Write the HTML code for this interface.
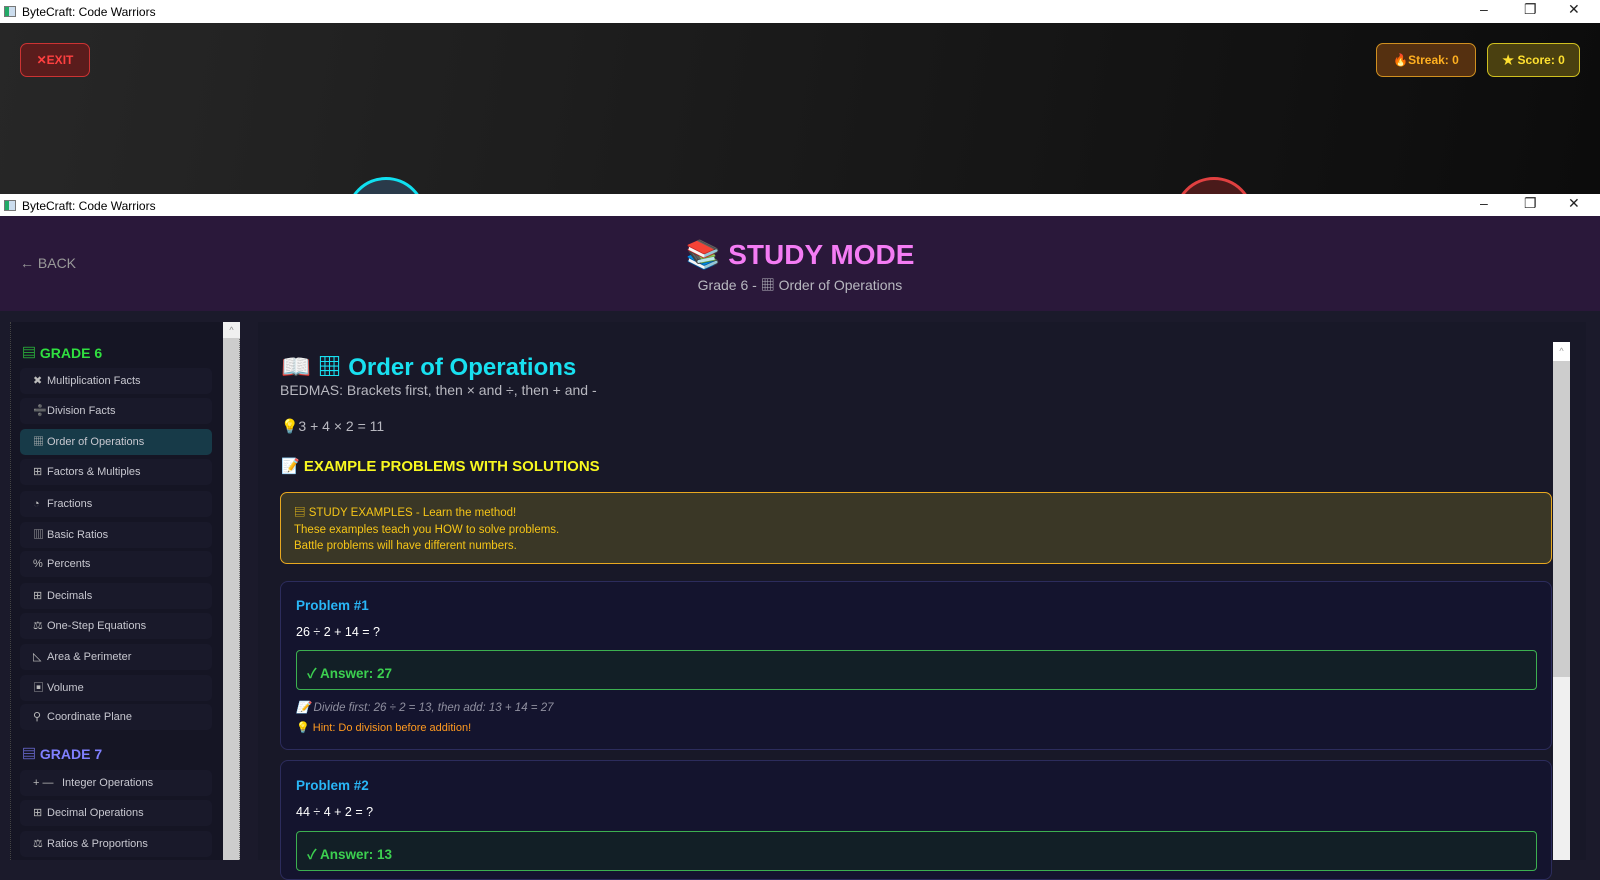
<!DOCTYPE html>
<html><head><meta charset="utf-8"><style>
*{margin:0;padding:0;box-sizing:border-box}
body{width:1600px;height:860px;overflow:hidden;background:#1b1a2b;font-family:"Liberation Sans","Noto Sans CJK SC",sans-serif;position:relative}
.abs{position:absolute}
.tb{left:0;width:1600px;height:23px;background:#fff;color:#000;font-size:12px}
.tb .t{position:absolute;left:22px;top:5px}
.tb .ic{position:absolute;left:4px;top:6px;width:12px;height:11px;border:1px solid #777;background:linear-gradient(90deg,#2a6 0 40%,#cde 40%)}
.tb .c{position:absolute;top:1px;font-size:14px;color:#222}
.si{position:absolute;left:20px;width:192px;height:26px;border-radius:5px;background:#19192a;color:#c8c8d0;font-size:11px;line-height:26px;padding-left:13px;white-space:nowrap}
.si b{display:inline-block;width:14px;color:#bbb;font-weight:normal}
.gh{position:absolute;left:22px;font-size:14px;font-weight:bold}
.txt{position:absolute;white-space:nowrap}
</style></head><body>
<div class="abs tb" style="top:0"><div class="ic"></div><div class="t">ByteCraft: Code Warriors</div>
<div class="c" style="left:1480px">&#8211;</div><div class="c" style="left:1524px">&#10064;</div><div class="c" style="left:1568px">&#10005;</div></div>
<div class="abs" style="top:23px;left:0;width:1600px;height:171px;background:linear-gradient(100deg,#272727,#0c0c0c);overflow:hidden">
 <div class="abs" style="left:20px;top:20px;width:70px;height:34px;border:1px solid #c33;border-radius:7px;background:#5a1c1c;color:#ff4040;font-size:12px;font-weight:bold;text-align:center;line-height:32px">✕EXIT</div>
 <div class="abs" style="left:1376px;top:20px;width:100px;height:34px;border:1px solid #d09020;border-radius:7px;background:#553010;color:#ffb020;font-size:12px;font-weight:bold;text-align:center;line-height:32px">🔥Streak: 0</div>
 <div class="abs" style="left:1487px;top:20px;width:93px;height:34px;border:1px solid #d0c020;border-radius:7px;background:#4a4010;color:#ffe030;font-size:12px;font-weight:bold;text-align:center;line-height:32px">★ Score: 0</div>
 <div class="abs" style="left:346px;top:154px;width:80px;height:80px;border-radius:50%;border:3px solid #10e0f0;background:#2a3a4a"></div>
 <div class="abs" style="left:1174px;top:154px;width:80px;height:80px;border-radius:50%;border:3px solid #e04040;background:#4a1a1a"></div>
</div>
<div class="abs tb" style="top:194px"><div class="ic"></div><div class="t">ByteCraft: Code Warriors</div>
<div class="c" style="left:1480px">&#8211;</div><div class="c" style="left:1524px">&#10064;</div><div class="c" style="left:1568px">&#10005;</div></div>
<div class="abs" style="top:216px;left:0;width:1600px;height:95px;background:#2a183a">
 <div class="txt" style="left:20px;top:39px;color:#999;font-size:14px">← BACK</div>
 <div class="txt" style="left:0;width:1600px;text-align:center;top:22px;color:#f47cf4;font-size:28px;font-weight:bold">📚 STUDY MODE</div>
 <div class="txt" style="left:0;width:1600px;text-align:center;top:59px;color:#b8b8c0;font-size:14px">Grade 6 - ▦ Order of Operations</div>
</div>
<div class="abs" style="left:10px;top:322px;width:230px;height:538px;background:#151524;border-left:1px dotted #444"></div>
<div class="abs" style="left:223px;top:322px;width:17px;height:538px;background:#cdcdcd;border-right:1px dotted #777"></div>
<div class="abs" style="left:223px;top:322px;width:17px;height:16px;background:#f0f0f0;color:#888;font-size:9px;text-align:center;line-height:16px">^</div>
<div class="gh" style="top:343px;color:#30e040">▤ GRADE 6</div>
<div class="si" style="top:368px"><b>✖</b>Multiplication Facts</div>
<div class="si" style="top:398px"><b>➗</b>Division Facts</div>
<div class="si" style="top:429px;background:#173a48"><b>▦</b>Order of Operations</div>
<div class="si" style="top:459px"><b>⊞</b>Factors &amp; Multiples</div>
<div class="si" style="top:491px"><b>◔</b>Fractions</div>
<div class="si" style="top:522px"><b>▥</b>Basic Ratios</div>
<div class="si" style="top:551px"><b>%</b>Percents</div>
<div class="si" style="top:583px"><b>⊞</b>Decimals</div>
<div class="si" style="top:613px"><b>⚖</b>One-Step Equations</div>
<div class="si" style="top:644px"><b>◺</b>Area &amp; Perimeter</div>
<div class="si" style="top:675px"><b>▣</b>Volume</div>
<div class="si" style="top:704px"><b>⚲</b>Coordinate Plane</div>
<div class="gh" style="top:744px;color:#8080ff">▤ GRADE 7</div>
<div class="si" style="top:770px"><b style="width:29px">+ —</b>Integer Operations</div>
<div class="si" style="top:800px"><b>⊞</b>Decimal Operations</div>
<div class="si" style="top:831px"><b>⚖</b>Ratios &amp; Proportions</div>
<div class="abs" style="left:258px;top:322px;width:1328px;height:538px;background:#181828"></div>
<div class="abs" style="left:1553px;top:342px;width:17px;height:518px;background:#f0f0f0"></div>
<div class="abs" style="left:1553px;top:361px;width:17px;height:316px;background:#cdcdcd"></div>
<div class="abs" style="left:1553px;top:342px;width:17px;height:19px;background:#fff;color:#999;font-size:9px;text-align:center;line-height:19px">^</div>
<div class="txt" style="left:281px;top:347px;color:#18e0f0;font-size:24px;font-weight:bold">📖 ▦ Order of Operations</div>
<div class="txt" style="left:280px;top:382px;color:#b8b8c0;font-size:14px">BEDMAS: Brackets first, then × and ÷, then + and -</div>
<div class="txt" style="left:281px;top:418px;color:#b8b8c0;font-size:14px">💡3 + 4 × 2 = 11</div>
<div class="txt" style="left:281px;top:457px;color:#f8f820;font-size:15px;font-weight:bold">📝 EXAMPLE PROBLEMS WITH SOLUTIONS</div>
<div class="abs" style="left:280px;top:492px;width:1272px;height:72px;border:1px solid #e8a820;border-radius:7px;background:#3a3726"></div>
<div class="txt" style="left:294px;top:505px;color:#f5c518;font-size:11.5px;line-height:16.5px">▤ STUDY EXAMPLES - Learn the method!<br>These examples teach you HOW to solve problems.<br>Battle problems will have different numbers.</div>
<div class="abs" style="left:280px;top:581px;width:1272px;height:169px;border:1px solid #2c2c5c;border-radius:8px;background:#14142e"></div>
<div class="txt" style="left:296px;top:598px;color:#29b6f6;font-size:13.5px;font-weight:bold">Problem #1</div>
<div class="txt" style="left:296px;top:625px;color:#fff;font-size:12.5px">26 ÷ 2 + 14 = ?</div>
<div class="abs" style="left:296px;top:650px;width:1241px;height:40px;border:1px solid #3cb050;border-radius:4px;background:#121f26"></div>
<div class="txt" style="left:307px;top:662px;color:#3cd050;font-size:13.5px;font-weight:bold">✓ Answer: 27</div>
<div class="txt" style="left:296px;top:700px;color:#9090a0;font-size:11.5px;font-style:italic">📝 Divide first: 26 ÷ 2 = 13, then add: 13 + 14 = 27</div>
<div class="txt" style="left:296px;top:721px;color:#ff9a20;font-size:11px">💡 Hint: Do division before addition!</div>
<div class="abs" style="left:280px;top:760px;width:1272px;height:120px;border:1px solid #2c2c5c;border-radius:8px;background:#14142e"></div>
<div class="txt" style="left:296px;top:778px;color:#29b6f6;font-size:13.5px;font-weight:bold">Problem #2</div>
<div class="txt" style="left:296px;top:805px;color:#fff;font-size:12.5px">44 ÷ 4 + 2 = ?</div>
<div class="abs" style="left:296px;top:831px;width:1241px;height:40px;border:1px solid #3cb050;border-radius:4px;background:#121f26"></div>
<div class="txt" style="left:307px;top:843px;color:#3cd050;font-size:13.5px;font-weight:bold">✓ Answer: 13</div>
</body></html>
